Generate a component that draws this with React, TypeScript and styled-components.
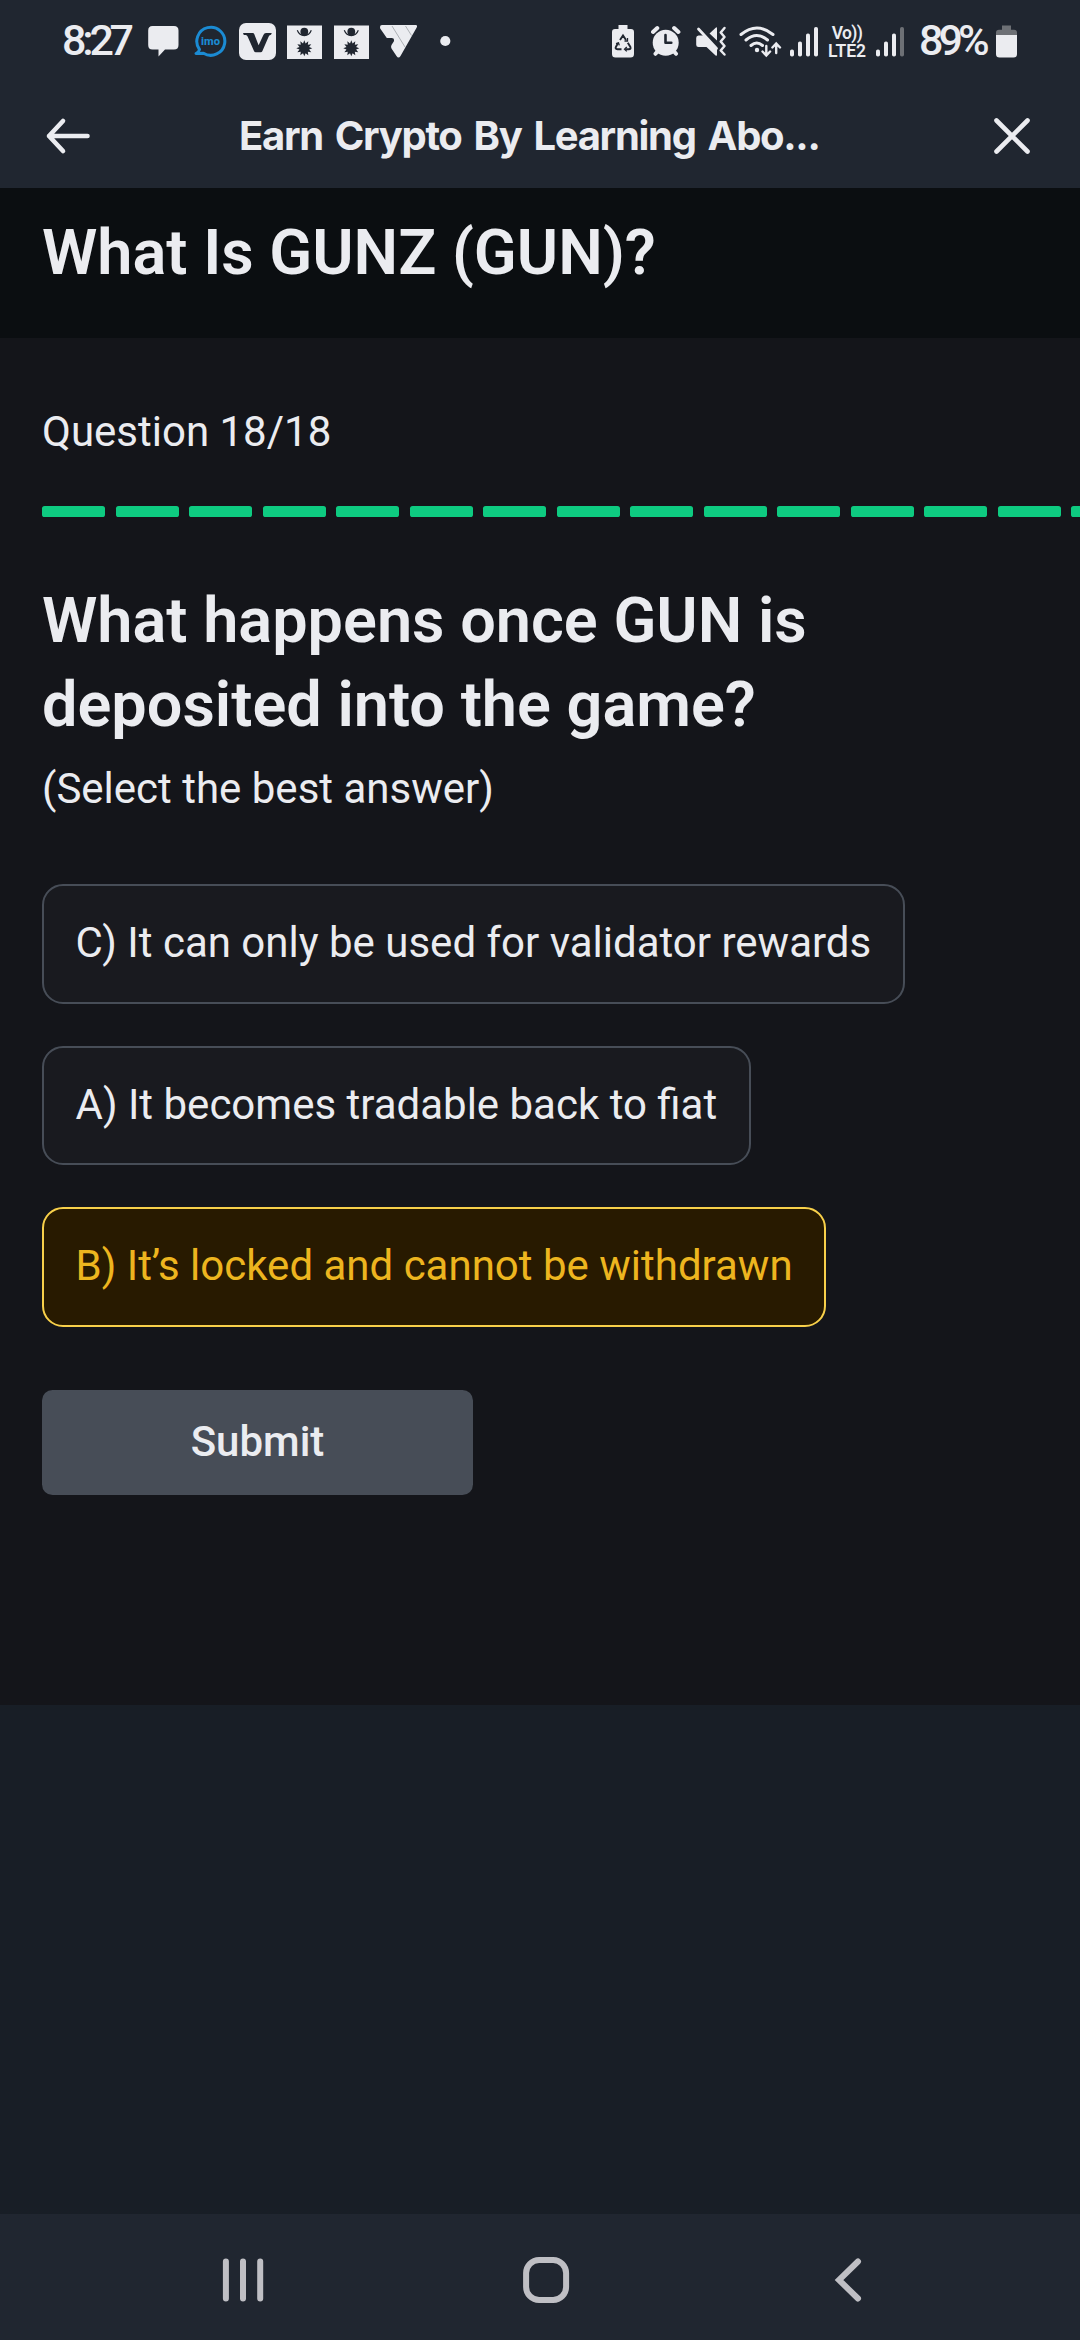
import React from "react";
import styled, { createGlobalStyle } from "styled-components";

const ink = "#ebecf0";
const barColor = "#202630";

const GlobalStyle = createGlobalStyle`
  * { box-sizing: border-box; }
  body { margin: 0; background: #181e26; overflow: hidden; }
`;

const Screen = styled.div`
  width: 1080px;
  height: 2340px;
  display: flex;
  flex-direction: column;
  overflow: hidden;
  background: #181e26;
  color: ${ink};
  font-family: Roboto, "Noto Sans", sans-serif;
`;

const StatusBar = styled.div`
  height: 84px;
  flex: none;
  display: flex;
  justify-content: space-between;
  padding: 0 63px 0 62px;
  background: ${barColor};
`;

const StatusGroup = styled.div`
  display: flex;
  height: 84px;
`;

const StatusText = styled.div<{ $width: number; $spacing: number; $indent?: number }>`
  width: ${(p) => p.$width}px;
  padding-left: ${(p) => p.$indent ?? 0}px;
  font-size: 43px;
  font-weight: 500;
  line-height: 80px;
  letter-spacing: ${(p) => p.$spacing}px;
  white-space: nowrap;
`;

const StatusSvg = styled.svg<{ $gap: number }>`
  display: block;
  flex: none;
  height: 84px;
  margin-left: ${(p) => p.$gap}px;
`;

const Volte = styled.div`
  width: 42px;
  margin-left: 8px;
  padding-top: 24px;
  display: flex;
  flex-direction: column;
  align-items: center;
  font-weight: 600;
  font-size: 17.5px;
  line-height: 18px;
  white-space: nowrap;
`;

const VolteTop = styled.span`
  letter-spacing: -0.6px;
`;

const Header = styled.header`
  height: 104px;
  flex: none;
  display: flex;
  align-items: center;
  padding: 0 42px;
  background: ${barColor};
`;

const HeaderTitle = styled.div`
  flex: 1;
  padding-left: 145px;
  font-family: Inter, sans-serif;
  font-size: 40px;
  font-weight: 700;
  line-height: 54px;
  letter-spacing: -1.3px;
  word-spacing: 3.8px;
  white-space: nowrap;
`;

const HeaderIcon = styled.svg`
  display: block;
  flex: none;
  width: 52px;
  height: 52px;
  fill: none;
  stroke: ${ink};
  stroke-width: 4.6;
  stroke-linecap: round;
  stroke-linejoin: round;
`;

const CourseBar = styled.div`
  height: 150px;
  flex: none;
  padding: 23px 42px 0;
  background: #0b0e11;
`;

const Title = styled.h1`
  margin: 0;
  font-size: 63px;
  font-weight: 600;
  line-height: 84px;
`;

const Quiz = styled.main`
  height: 1367px;
  flex: none;
  display: flex;
  flex-direction: column;
  align-items: flex-start;
  padding: 62px 42px 0;
  background: #14151a;
`;

const Body = styled.p`
  margin: 0;
  font-size: 42px;
  line-height: 63px;
`;

const Progress = styled.div`
  display: flex;
  gap: 10.5px;
  margin-top: 43px;
`;

const Segment = styled.span`
  flex: none;
  width: 63px;
  height: 10.5px;
  border-radius: 2.6px;
  background: #0ecb81;
`;

const Question = styled.h2`
  width: 996px;
  margin: 62px 0 10.5px;
  font-size: 63px;
  font-weight: 600;
  line-height: 84px;
`;

const Options = styled.div`
  display: flex;
  flex-direction: column;
  align-items: flex-start;
  gap: 42px;
  margin: 64px 0 63px;
`;

const Option = styled.button<{ $selected?: boolean }>`
  height: 119.5px;
  padding: 0 31.5px 2px;
  border: 2px solid ${(p) => (p.$selected ? "#f8d04a" : "#474d57")};
  border-radius: 21px;
  background: ${(p) => (p.$selected ? "#281a00" : "#191a1f")};
  color: ${(p) => (p.$selected ? "#edb51f" : ink)};
  font: 400 42px/63px Roboto, "Noto Sans", sans-serif;
  white-space: nowrap;
`;

const Submit = styled.button`
  width: 431px;
  height: 105px;
  padding: 0 0 2px;
  border: 0;
  border-radius: 10.5px;
  background: #474d57;
  color: ${ink};
  font: 500 42px/63px Roboto, "Noto Sans", sans-serif;
`;

const NavBar = styled.nav`
  height: 126px;
  flex: none;
  margin-top: auto;
  display: flex;
  align-items: center;
  justify-content: space-between;
  padding: 6px 201px 0 213px;
  background: ${barColor};
`;

const NavIcon = styled.svg`
  display: block;
  width: 60px;
  height: 60px;
  fill: none;
  stroke: #bfbfc4;
  stroke-width: 6;
  stroke-linecap: round;
`;

type IconProps = { x: number; w: number; gap: number; children: React.ReactNode };

/* Status icons share the bar's own coordinate space; x is the left edge in it. */
const StatusIcon = ({ x, w, gap, children }: IconProps) => (
  <StatusSvg $gap={gap} width={w} viewBox={`${x} 0 ${w} 84`} fill={ink}>
    {children}
  </StatusSvg>
);

const sunPoints = Array.from({ length: 24 }, (_, i) => {
  const r = i % 2 ? 5 : 8;
  const a = (i * Math.PI) / 12;
  return `${(17.3 + r * Math.sin(a)).toFixed(2)},${(48.3 - r * Math.cos(a)).toFixed(2)}`;
}).join(" ");

const SunCard = ({ gap }: { gap: number }) => (
  <StatusIcon x={0} w={35} gap={gap}>
    <rect x="0" y="25.5" width="35" height="33.5" />
    <circle cx="17.300" cy="31.700" r="3.900" fill={barColor} />
    <path d="M10.300 30.300q2 5.300 7 5.300t7-5.300" fill="none" stroke={barColor} strokeWidth="1.200" />
    <polygon points={sunPoints} fill={barColor} />
  </StatusIcon>
);

const Signal = ({ gap, dim }: { gap: number; dim?: boolean }) => (
  <StatusIcon x={0} w={28} gap={gap}>
    <rect x="0" y="49.500" width="4" height="7" rx="1.8" />
    <rect x="8" y="41.500" width="4" height="15" rx="1.8" />
    <rect x="16" y="33.500" width="4" height="23" rx="1.8" />
    <rect x="24" y="27" width="4" height="29.500" rx="1.8" fill={dim ? "#6d7075" : ink} />
  </StatusIcon>
);

const OPTIONS = [
  { text: "C) It can only be used for validator rewards" },
  { text: "A) It becomes tradable back to fiat" },
  { text: "B) It’s locked and cannot be withdrawn", selected: true },
];

export default function App() {
  return (
    <Screen>
      <GlobalStyle />
      <StatusBar>
        <StatusGroup>
          <StatusText $width={76} $spacing={-4.2}>8:27</StatusText>
          <StatusIcon x={148} w={31} gap={10}>
            <path d="M152.500 26h21.500q4.500 0 4.500 4.500V45q0 4.500-4.500 4.500H165l-6.500 7V49.500h-6q-4.300 0-4.300-4.500V30.500q0-4.500 4.300-4.500Z" />
          </StatusIcon>
          <StatusIcon x={194} w={33} gap={15}>
            <path
              d="M199.500 49.500A14 14 0 1 1 203.500 53.200L196 53.500Q199 52 199.500 49.500Z"
              fill="none"
              stroke="#1b8bd3"
              strokeWidth="3"
              strokeLinejoin="round"
            />
            <text
              x="210.500"
              y="45.300"
              textAnchor="middle"
              textLength="19"
              lengthAdjust="spacingAndGlyphs"
              fontFamily="Roboto, sans-serif"
              fontSize="11"
              fontWeight="800"
              fill="#1b8bd3"
            >
              imo
            </text>
          </StatusIcon>
          <StatusIcon x={239} w={37} gap={12}>
            <rect x="239" y="23" width="37" height="37" rx="7" />
            <path
              d="M243 33h9.800q1 0 1.400 1L258.600 45.300 263.400 35q.8-2 2.600-2H271.800l-.8 1.800q-1.600.2-2.300 1.600L262.300 51.200q-.5 1.100-1.600 1.100H255.700q-1.100 0-1.600-1.100L247.600 36.500q-.6-1.500-1.800-1.500H243.800Z"
              fill={barColor}
            />
          </StatusIcon>
          <SunCard gap={11} />
          <SunCard gap={12} />
          <StatusIcon x={380} w={37} gap={11}>
            <path d="M382 25H415.500q2.500 0 1.200 2.500L400.500 56q-2 3-4 0L391.500 48.500q-1-2 .3-4l2-3q1-3.500-2-3.500h-5L380.200 28.500q-.8-3.500 1.800-3.500Z" />
            <path d="M392 26l13 21M405.500 26l6 9.500" stroke="#a5a8ad" strokeWidth="0.9" />
          </StatusIcon>
          <StatusIcon x={440} w={11} gap={23}>
            <circle cx="445.300" cy="41" r="5.100" />
          </StatusIcon>
        </StatusGroup>
        <StatusGroup>
          <StatusIcon x={612} w={22} gap={0}>
            <path d="M618.500 25h9v4H631q3 0 3 3V54q0 3.500-3.500 3.500h-15q-3.500 0-3.500-3.500V32q0-3 3-3h3.500Z" />
            <g fill="none" stroke={barColor} strokeWidth="1.900">
              <path d="M620 40l3-4.500 3 4.500M627.800 42.800l2.600 4.200q.8 2.200-1.600 2.200h-3.600M621.500 49.200h-4q-2.800 0-1.500-2.500l2-3.600" />
              <path d="M624.500 41h3v-3M626.800 47l-2.300 2.200 2.300 2.200M616 43.600l2.500-.8.800 2.600" strokeWidth="1.300" />
            </g>
          </StatusIcon>
          <StatusIcon x={651} w={30} gap={17}>
            <circle cx="665.700" cy="42.700" r="13" />
            <path
              d="M653 32l4.300-4M678.400 32l-4.300-4M655.500 53.800l3-3.500M676 53.800l-3-3.500"
              stroke={ink}
              strokeWidth="4"
              strokeLinecap="round"
            />
            <path d="M665.500 35v7.800h5.800" fill="none" stroke={barColor} strokeWidth="2.600" strokeLinecap="round" strokeLinejoin="round" />
          </StatusIcon>
          <StatusIcon x={696} w={31} gap={15}>
            <path d="M709.500 33.500L716 27.500q1-.5 1 .8V40.500Z" />
            <path d="M698.500 35.500h6L717 49V54.500q0 2-1.700.7L706.500 47h-8q-2.300 0-2.300-2.300V38q0-2.500 2.300-2.500Z" />
            <path d="M698.500 29L716.500 48.500" stroke={ink} strokeWidth="2.800" strokeLinecap="round" />
            <path
              d="M724.500 28l-3.800 4.500 3.800 4.500-3.800 4.500 3.800 4.500-3.800 4.500 3.800 4"
              fill="none"
              stroke={ink}
              strokeWidth="2.500"
              strokeLinecap="round"
              strokeLinejoin="round"
            />
          </StatusIcon>
          <StatusIcon x={739} w={43} gap={12}>
            <g fill="none" stroke={ink} strokeWidth="3" strokeLinecap="round">
              <path d="M741 34.500q15.800-13 32 0M746 40q10.800-9 21.500 0M751 45.500q5.700-5 11.500 0" />
              <path d="M766.300 46v9M762.500 51.500l3.800 4 3.800-4M776.200 53v-9M772.400 47.500l3.800-4 3.800 4" strokeWidth="2.400" />
            </g>
            <circle cx="757" cy="50" r="2.200" />
          </StatusIcon>
          <Signal gap={8} />
          <Volte>
            <VolteTop>Vo))</VolteTop>
            <span>LTE2</span>
          </Volte>
          <Signal gap={8} dim />
          <StatusText $width={77} $spacing={-5} $indent={15}>89%</StatusText>
          <StatusIcon x={996} w={21} gap={15}>
            <path d="M1002 25.500h9v4.300H1014q3 0 3 3V35H996v-2.200q0-3 3-3h3Z" fill="#6d7075" />
            <path d="M996 35h21V54q0 3.500-3.500 3.500h-14q-3.500 0-3.500-3.500Z" />
          </StatusIcon>
        </StatusGroup>
      </StatusBar>

      <Header>
        <HeaderIcon viewBox="42 110 52 52">
          <path d="M87.500 136H49M63 121L49 136l14 15" />
        </HeaderIcon>
        <HeaderTitle>Earn Crypto By Learning Abo...</HeaderTitle>
        <HeaderIcon viewBox="986 110 52 52">
          <path d="M996.500 120.500l31 31M1027.500 120.500l-31 31" />
        </HeaderIcon>
      </Header>

      <CourseBar>
        <Title>What Is GUNZ (GUN)?</Title>
      </CourseBar>

      <Quiz>
        <Body>Question 18/18</Body>
        <Progress>
          {Array.from({ length: 18 }, (_, i) => (
            <Segment key={i} />
          ))}
        </Progress>
        <Question>
          What happens once GUN is
          <br />
          deposited into the game?
        </Question>
        <Body>(Select the best answer)</Body>
        <Options>
          {OPTIONS.map((o) => (
            <Option key={o.text} $selected={o.selected}>
              {o.text}
            </Option>
          ))}
        </Options>
        <Submit>Submit</Submit>
      </Quiz>

      <NavBar>
        <NavIcon viewBox="213.500 2250.500 60 60">
          <path d="M226.400 2262v37M243.500 2262v37M260.700 2262v37" />
        </NavIcon>
        <NavIcon viewBox="515.500 2250.500 60 60">
          <rect x="525.600" y="2260.500" width="40" height="40" rx="13" />
        </NavIcon>
        <NavIcon viewBox="819 2250.500 60 60">
          <path d="M858 2262l-19 18.500 19 18.500" />
        </NavIcon>
      </NavBar>
    </Screen>
  );
}
